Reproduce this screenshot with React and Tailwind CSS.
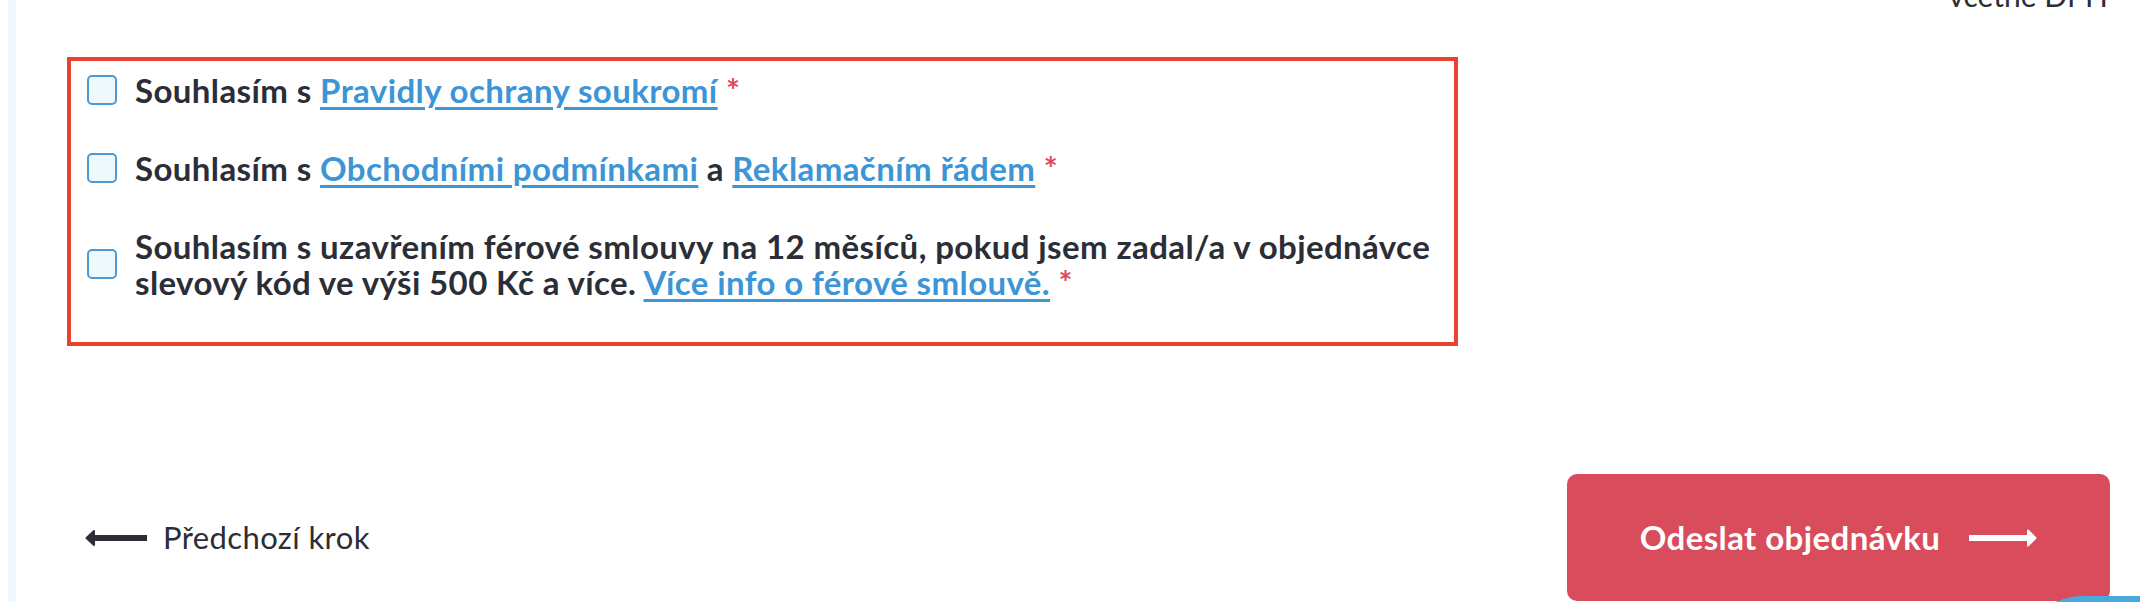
import React from "react";

function Checkbox() {
  return (
    <span className="shrink-0 w-[30px] h-[30px] rounded-[5px] border-2 border-[#4a9ad6] bg-[#eef8fd]" />
  );
}

function Link({ children }) {
  return (
    <a className="text-[#3d95d6] underline decoration-[2.5px] underline-offset-[4px] cursor-pointer">
      {children}
    </a>
  );
}

function Star() {
  return <span className="text-[#d94c5a]"> *</span>;
}

function LeftArrow() {
  return (
    <svg width="62" height="18" viewBox="0 0 62 18" className="shrink-0">
      <rect x="7" y="6" width="55" height="6" fill="#2b2e36" />
      <path d="M1.5 9 L9 2 L9 16 Z" fill="#2b2e36" stroke="#2b2e36" strokeWidth="2" strokeLinejoin="round" />
    </svg>
  );
}

function RightArrow() {
  return (
    <svg width="68" height="20" viewBox="0 0 68 20" className="shrink-0">
      <rect x="0" y="7" width="60" height="6" fill="#ffffff" />
      <path d="M66.5 10 L59 2.5 L59 17.5 Z" fill="#ffffff" stroke="#ffffff" strokeWidth="2" strokeLinejoin="round" />
    </svg>
  );
}

export default function App() {
  return (
    <div
      className="relative flex h-[602px] w-full overflow-hidden bg-white text-[#2b2e36]"
      style={{ fontFamily: "Lato, 'Noto Sans', sans-serif" }}
    >
      <div className="ml-[8px] w-[8px] shrink-0 bg-[#eef8fd]" />
      <div className="flex flex-1 flex-col pl-[51px] pr-[30px]">
        <div className="-mt-[20px] flex justify-end pr-[2px] text-[30px] leading-[30px]">
          včetně DPH
        </div>

        <div className="mt-[47px] w-[1391px] border-4 border-[#e94330] pl-[16px] pr-[20px] pt-[11px] pb-[42px]">
          <div className="flex flex-col gap-[42px] text-[33px] font-bold leading-[36px] tracking-[0.4px]">
            <div className="flex items-center gap-[18px]">
              <Checkbox />
              <p>
                Souhlasím s <Link>Pravidly ochrany soukromí</Link>
                <Star />
              </p>
            </div>
            <div className="flex items-center gap-[18px]">
              <Checkbox />
              <p>
                Souhlasím s <Link>Obchodními podmínkami</Link> a{" "}
                <Link>Reklamačním řádem</Link>
                <Star />
              </p>
            </div>
            <div className="flex items-center gap-[18px]">
              <Checkbox />
              <p className="whitespace-nowrap">
                Souhlasím s uzavřením férové smlouvy na 12 měsíců, pokud jsem zadal/a v objednávce
                <br />
                slevový kód ve výši 500 Kč a více. <Link>Více info o férové smlouvě.</Link>
                <Star />
              </p>
            </div>
          </div>
        </div>

        <div className="mt-[128px] flex h-[127px] shrink-0 items-center justify-between">
          <a className="ml-[18px] flex items-center gap-[16px] text-[31px] leading-none tracking-[0.4px] cursor-pointer">
            <LeftArrow />
            <span>Předchozí krok</span>
          </a>
          <button className="flex h-[127px] w-[543px] items-center justify-center gap-[29px] rounded-[10px] bg-[#d84c5b] text-[33px] font-bold tracking-[0.4px] text-white">
            <span>Odeslat objednávku</span>
            <RightArrow />
          </button>
        </div>
      </div>

      <div className="absolute left-[2014px] top-[596px] h-[140px] w-[160px] rounded-tl-[70px] bg-[#4aa9dc]" />
    </div>
  );
}
